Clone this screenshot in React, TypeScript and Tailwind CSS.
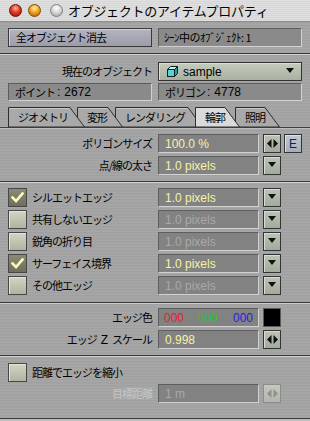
import React from "react";

const metal =
  "bg-[repeating-linear-gradient(180deg,#a7a7a7_0px,#a7a7a7_1px,#a0a0a0_1px,#a0a0a0_2px,#a4a4a4_2px,#a4a4a4_3px)]";

function Light({ kind, className = "" }: { kind: "red" | "orange" | "gray"; className?: string }) {
  const cls =
    kind === "red"
      ? "bg-[radial-gradient(circle_at_50%_30%,#ffb0a0_0%,#e03a22_45%,#8e120a_100%)] border-[#6a1008]"
      : kind === "orange"
      ? "bg-[radial-gradient(circle_at_50%_30%,#fff0b0_0%,#f4a21c_45%,#a05a08_100%)] border-[#7a4a08]"
      : "bg-[radial-gradient(circle_at_50%_30%,#ffffff_0%,#d8d8d8_45%,#9a9a9a_100%)] border-[#808080]";
  return <div className={`w-[13px] h-[13px] rounded-full border ${cls} ${className}`} />;
}

function Sep() {
  return (
    <div className="flex flex-col">
      <div className="h-[1px] bg-[#3a3a3a]" />
      <div className="h-[1px] bg-[#cfcfcf]" />
    </div>
  );
}

function Field({
  children,
  disabled,
  className = "w-[101px]",
}: {
  children?: React.ReactNode;
  disabled?: boolean;
  className?: string;
}) {
  return (
    <div
      className={`h-[19px] flex items-center pl-[6px] bg-[#828282] border border-t-[#5e5e5e] border-l-[#5e5e5e] border-b-[#d2d2d2] border-r-[#d2d2d2] font-['Liberation_Sans',sans-serif] text-[12px] leading-none ${
        disabled ? "text-[#a9a9a9]" : "text-[#f6f2a6]"
      } ${className}`}
    >
      {children}
    </div>
  );
}

function LRIcon({ disabled }: { disabled?: boolean }) {
  const c = disabled ? "#8e928a" : "#111111";
  return (
    <svg width="11" height="9" viewBox="0 0 11 9">
      <polygon points="0,4.5 4.5,0 4.5,9" fill={c} />
      <polygon points="6.5,0 11,4.5 6.5,9" fill={c} />
    </svg>
  );
}

function DownIcon() {
  return (
    <svg width="8" height="5" viewBox="0 0 8 5" className="mb-[2px]">
      <polygon points="0,0 8,0 4,5" fill="#111" />
    </svg>
  );
}

function Btn({
  children,
  disabled,
  className = "",
}: {
  children?: React.ReactNode;
  disabled?: boolean;
  className?: string;
}) {
  return (
    <div
      className={`w-[18px] h-[19px] flex items-center justify-center border ${
        disabled
          ? "border-[#8a8e86] bg-[linear-gradient(#c4c8c0,#b2b6ae)]"
          : "border-[#343434] bg-[linear-gradient(#bcc4b6,#a2aa9c)] shadow-[inset_1px_1px_0_#d8ddd4]"
      } ${className}`}
    >
      {children}
    </div>
  );
}

function Check({ checked }: { checked?: boolean }) {
  return (
    <div
      className={`w-[19px] h-[19px] flex items-center justify-center border border-[#474747] ${
        checked
          ? "bg-[linear-gradient(#8a8a78,#6e6e5e)]"
          : "bg-[linear-gradient(#d4d4c6,#b2b2a2)] shadow-[inset_1px_1px_0_#e4e4d8]"
      }`}
    >
      {checked && (
        <svg width="13" height="11" viewBox="0 0 13 11">
          <polyline
            points="1.5,5.5 5,9 11.5,1.5"
            fill="none"
            stroke="#fcfcb8"
            strokeWidth="2.6"
            strokeLinecap="square"
          />
        </svg>
      )}
    </div>
  );
}

function Label({ children, disabled }: { children: React.ReactNode; disabled?: boolean }) {
  return (
    <div
      className={`w-[152px] flex justify-end items-center text-[11px] tracking-[-1px] leading-none ${
        disabled ? "text-[#c6c6c6]" : "text-black"
      }`}
    >
      {children}
    </div>
  );
}

const tabs = [
  { label: "ジオメトリ", w: "w-[77px]", ml: "ml-[8px]", z: "z-[5]", W: 77 },
  { label: "変形", w: "w-[46px]", ml: "-ml-[8px]", z: "z-[4]", W: 46 },
  { label: "レンダリング", w: "w-[88px]", ml: "-ml-[8px]", z: "z-[3]", W: 88 },
  { label: "輪郭", w: "w-[45px]", ml: "-ml-[8px]", z: "z-[10]", W: 45, active: true },
  { label: "照明", w: "w-[45px]", ml: "-ml-[5px]", z: "z-[1]", W: 45 },
];

function Tab({ t }: { t: (typeof tabs)[number] }) {
  const pts = `0.5,20 0.5,0.5 ${t.W - 15},0.5 ${t.W - 0.5},20`;
  return (
    <div className={`relative h-[20px] ${t.w} ${t.ml} ${t.z} flex items-center pl-[10px]`}>
      <svg className="absolute inset-0" width={t.W} height="20" viewBox={`0 0 ${t.W} 20`}>
        <polygon points={pts} fill={t.active ? "#dadada" : "#a9a9a9"} stroke="#2e2e2e" strokeWidth="1" />
        {!t.active && <line x1="1.5" y1="1.5" x2={t.W - 16} y2="1.5" stroke="#c8c8c8" />}
      </svg>
      <span className="relative text-[11px] tracking-[-1px] leading-none">{t.label}</span>
    </div>
  );
}

function Cube() {
  return (
    <svg width="11" height="11" viewBox="0 0 11 11">
      <polygon points="0.5,3.5 3.5,0.5 10.5,0.5 7.5,3.5" fill="#bff4f4" stroke="#1a1a1a" strokeWidth="1" />
      <polygon points="7.5,3.5 10.5,0.5 10.5,7.5 7.5,10.5" fill="#2a9aa0" stroke="#1a1a1a" strokeWidth="1" />
      <rect x="0.5" y="3.5" width="7" height="7" fill="#4ed8dc" stroke="#1a1a1a" strokeWidth="1" />
    </svg>
  );
}

function InfoBox({ label, value }: { label: string; value: string }) {
  return (
    <div className="w-[144px] h-[18px] flex items-center pl-[6px] bg-[#8a8a8a] border border-t-[#5e5e5e] border-l-[#5e5e5e] border-b-[#d2d2d2] border-r-[#d2d2d2] leading-none">
      <span className="text-[11px] tracking-[-1px]">{label}</span>
      <span className="ml-[2px] text-[12px] font-['Liberation_Sans',sans-serif]">:</span>
      <span className="ml-[4px] text-[12px] font-['Liberation_Sans',sans-serif]">{value}</span>
    </div>
  );
}

export default function App() {
  return (
    <div
      className={`w-[310px] h-[421px] flex flex-col overflow-hidden ${metal} font-['Noto_Sans_CJK_JP',sans-serif] text-black`}
    >
      {/* Title bar */}
      <div className="h-[22px] shrink-0 flex items-center bg-[repeating-linear-gradient(180deg,#e0e0e0_0px,#e0e0e0_1px,#d6d6d6_1px,#d6d6d6_2px)] border-b border-[#8c8c8c]">
        <Light kind="red" className="ml-[9px]" />
        <Light kind="orange" className="ml-[6px]" />
        <Light kind="gray" className="ml-[9px]" />
        <span className="ml-[5px] text-[13px] tracking-[-0.3px] leading-none">オブジェクトのアイテムプロパティ</span>
      </div>

      {/* Section 1 */}
      <div className="flex pt-[6px] pb-[6px] pl-[8px] gap-[6px]">
        <div className="w-[144px] h-[19px] flex items-center pl-[7px] border border-[#3a3a3a] bg-[linear-gradient(#b4b4c0,#9c9caa)] shadow-[inset_1px_1px_0_#d0d0da] text-[11px] tracking-[-1px] leading-none">
          全オブジェクト消去
        </div>
        <div className="w-[144px] h-[19px] flex items-center pl-[5px] bg-[#8a8a8a] border border-t-[#5e5e5e] border-l-[#5e5e5e] border-b-[#d2d2d2] border-r-[#d2d2d2] text-[11px] tracking-[-0.5px] leading-none">
          ｼｰﾝ中のｵﾌﾞｼﾞｪｸﾄ: 1
        </div>
      </div>
      <Sep />

      {/* Section 2 */}
      <div className="flex flex-col pt-[7px]">
        <div className="flex items-center">
          <Label>現在のオブジェクト</Label>
          <div className="ml-[6px] w-[144px] h-[19px] flex items-center pl-[8px] pr-[7px] border border-[#333] bg-[linear-gradient(#c4ccbe,#a8b0a2)] shadow-[inset_1px_1px_0_#dce2d8]">
            <Cube />
            <span className="ml-[5px] font-['Liberation_Sans',sans-serif] text-[12px] leading-none">sample</span>
            <div className="flex-1" />
            <DownIcon />
          </div>
        </div>
        <div className="flex gap-[6px] pl-[8px] mt-[2px]">
          <InfoBox label="ポイント" value="2672" />
          <InfoBox label="ポリゴン" value="4778" />
        </div>

        {/* Tabs */}
        <div className="flex mt-[6px]">
          {tabs.map((t) => (
            <Tab key={t.label} t={t} />
          ))}
        </div>
      </div>
      <div className="flex flex-col">
        <div className="h-[1px] bg-[#3c3c3c]" />
        <div className="h-[1px] bg-[#bdbdbd]" />
      </div>

      {/* Section 3 */}
      <div className="flex flex-col gap-[3px] pt-[5px] pb-[6px]">
        <div className="flex items-center">
          <Label>ポリゴンサイズ</Label>
          <Field className="ml-[6px] w-[101px]">100.0 %</Field>
          <Btn className="ml-[4px]">
            <LRIcon />
          </Btn>
          <div className="ml-[3px] w-[18px] h-[19px] flex items-center justify-center border border-[#343434] bg-[linear-gradient(#c0cad2,#a4aeb8)] shadow-[inset_1px_1px_0_#dae0e6] font-['Liberation_Sans',sans-serif] text-[12px] text-[#1a2050] leading-none">
            E
          </div>
        </div>
        <div className="flex items-center">
          <Label>点/線の太さ</Label>
          <Field className="ml-[6px] w-[101px]">1.0 pixels</Field>
          <Btn className="ml-[4px]">
            <DownIcon />
          </Btn>
        </div>
      </div>
      <Sep />

      {/* Section 4: edges */}
      <div className="flex flex-col gap-[3px] pt-[5px] pb-[7px]">
        {[
          { l: "シルエットエッジ", c: true },
          { l: "共有しないエッジ", c: false },
          { l: "鋭角の折り目", c: false },
          { l: "サーフェイス境界", c: true },
          { l: "その他エッジ", c: false },
        ].map((r) => (
          <div key={r.l} className="flex items-center">
            <div className="w-[152px] flex items-center pl-[8px]">
              <Check checked={r.c} />
              <span className="ml-[5px] text-[11px] tracking-[-1px] leading-none">{r.l}</span>
            </div>
            <Field className="ml-[6px] w-[101px]" disabled={!r.c}>
              1.0 pixels
            </Field>
            <Btn className="ml-[4px]">
              <DownIcon />
            </Btn>
          </div>
        ))}
      </div>
      <Sep />

      {/* Section 5: colour */}
      <div className="flex flex-col gap-[3px] pt-[4px] pb-[6px]">
        <div className="flex items-center">
          <Label>エッジ色</Label>
          <div className="ml-[6px] w-[101px] h-[19px] flex items-center bg-[#828282] border border-t-[#5e5e5e] border-l-[#5e5e5e] border-b-[#d2d2d2] border-r-[#d2d2d2] font-['Liberation_Sans',sans-serif] text-[12px] leading-none">
            <span className="ml-[5px] w-[34px] text-[#e8202a]">000</span>
            <span className="w-[35px] text-[#22c82a]">000</span>
            <span className="text-[#2222e0]">000</span>
          </div>
          <div className="ml-[4px] w-[18px] h-[19px] bg-black border border-[#5a5a5a]" />
        </div>
        <div className="flex items-center">
          <Label>
            <span>エッジ</span>
            <span className="mx-[4px] font-['Liberation_Sans',sans-serif] text-[12px] tracking-normal">Z</span>
            <span>スケール</span>
          </Label>
          <Field className="ml-[6px] w-[101px]">0.998</Field>
          <Btn className="ml-[4px]">
            <LRIcon />
          </Btn>
        </div>
      </div>
      <Sep />

      {/* Section 6: distance */}
      <div className="flex flex-col gap-[2px] pt-[6px]">
        <div className="flex items-center pl-[8px]">
          <Check />
          <span className="ml-[5px] text-[11px] tracking-[-1px] leading-none">距離でエッジを縮小</span>
        </div>
        <div className="flex items-center">
          <Label disabled>目標距離</Label>
          <Field className="ml-[6px] w-[101px]" disabled>
            1 m
          </Field>
          <Btn className="ml-[4px]" disabled>
            <LRIcon disabled />
          </Btn>
        </div>
      </div>
      <div className="flex-1" />
      <div className="h-[1px] bg-[#3a3a3a]" />
      <div className="h-[2px] bg-[#bdbdbd]" />
    </div>
  );
}
